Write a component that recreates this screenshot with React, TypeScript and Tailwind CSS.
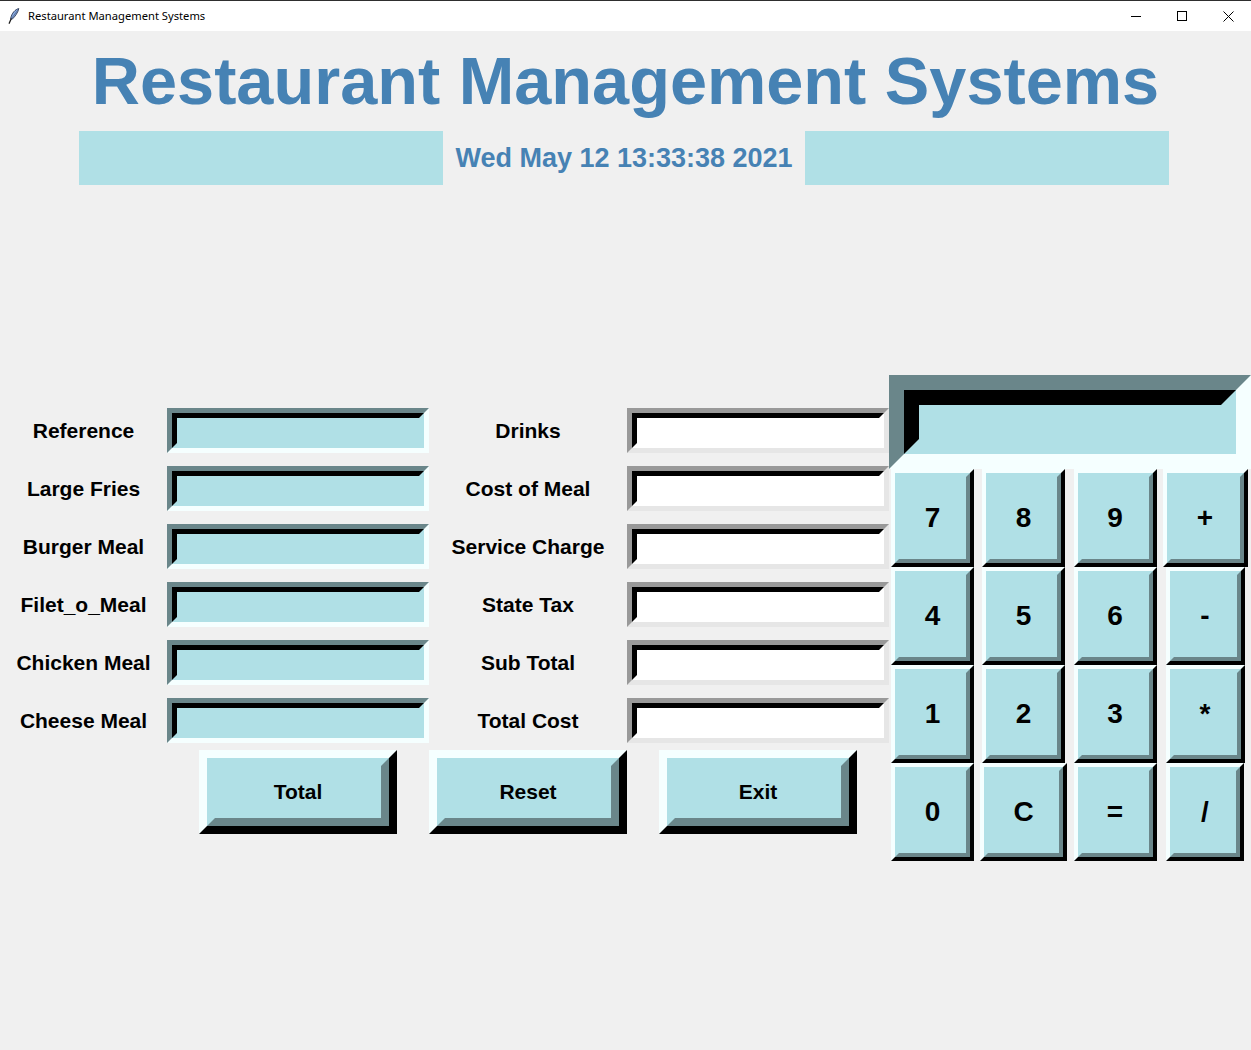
const POWDER = '#b0e0e6'

const leftRows = ['Reference', 'Large Fries', 'Burger Meal', 'Filet_o_Meal', 'Chicken Meal', 'Cheese Meal']
const midRows = ['Drinks', 'Cost of Meal', 'Service Charge', 'State Tax', 'Sub Total', 'Total Cost']

const calcRows = [
  [{ t: '7', w: 83 }, { t: '8', w: 83 }, { t: '9', w: 83 }, { t: '+', w: 85 }],
  [{ t: '4', w: 83 }, { t: '5', w: 83 }, { t: '6', w: 83 }, { t: '-', w: 79 }],
  [{ t: '1', w: 83 }, { t: '2', w: 83 }, { t: '3', w: 83 }, { t: '*', w: 79 }],
  [{ t: '0', w: 83 }, { t: 'C', w: 87 }, { t: '=', w: 83 }, { t: '/', w: 78 }],
]

function Feather() {
  return (
    <svg width="12" height="16" viewBox="0 0 12 16">
      <path d="M10.8 0.6 C7.5 1.2 3.6 5 2.6 10.8 L4.2 11.2 C7.2 8.4 10 4.5 10.8 0.6 Z" fill="#86a9e0" stroke="#2a3650" strokeWidth="0.9" />
      <path d="M9.5 2.5 L3.4 10.8" stroke="#3c4c6e" strokeWidth="0.6" />
      <path d="M3.1 11 L1.2 15.2" stroke="#1b1b1b" strokeWidth="1.3" strokeLinecap="round" />
    </svg>
  )
}

function TitleBar() {
  return (
    <div className="h-[31px] bg-white border-t border-[#2e2e2e] flex items-center shrink-0">
      <div className="pl-[8px] pr-[8px] flex items-center">
        <Feather />
      </div>
      <span className="text-[11.2px] text-black" style={{ fontFamily: '"Noto Sans", "Open Sans", sans-serif' }}>
        Restaurant Management Systems
      </span>
      <div className="ml-auto flex h-full">
        <div className="w-[46px] flex items-center justify-center">
          <svg width="10" height="10" viewBox="0 0 10 10"><path d="M0 5.5 H10" stroke="#000" strokeWidth="1" /></svg>
        </div>
        <div className="w-[46px] flex items-center justify-center">
          <svg width="10" height="10" viewBox="0 0 10 10"><rect x="0.5" y="0.5" width="9" height="9" fill="none" stroke="#000" strokeWidth="1" /></svg>
        </div>
        <div className="w-[46px] flex items-center justify-center">
          <svg width="11" height="11" viewBox="0 0 11 11"><path d="M0.5 0.5 L10.5 10.5 M10.5 0.5 L0.5 10.5" stroke="#000" strokeWidth="1" /></svg>
        </div>
      </div>
    </div>
  )
}

function Entry({ white }: { white?: boolean }) {
  return white ? (
    <div className="h-[45px] border-[5px] border-t-[#999999] border-l-[#999999] border-b-[#e6e6e6] border-r-[#e6e6e6]">
      <div className="h-full border-[5px] border-t-black border-l-black border-b-white border-r-white bg-white" />
    </div>
  ) : (
    <div className="h-[45px] border-[5px] border-t-[#6a868a] border-l-[#6a868a] border-b-[#f5ffff] border-r-[#f5ffff]">
      <div className="h-full border-[5px] border-t-black border-l-black border-b-[#b0e0e6] border-r-[#b0e0e6] bg-[#b0e0e6]" />
    </div>
  )
}

function BigButton({ label }: { label: string }) {
  return (
    <div className="w-[198px] h-[84px] border-[8px] border-t-[#f5ffff] border-l-[#f5ffff] border-b-black border-r-black">
      <div className="h-full border-[8px] border-t-[#b0e0e6] border-l-[#b0e0e6] border-b-[#6a868a] border-r-[#6a868a] bg-[#b0e0e6] flex items-center justify-center text-[21px] font-bold text-black">
        {label}
      </div>
    </div>
  )
}

function CalcButton({ label, w }: { label: string; w: number }) {
  return (
    <div className="h-[98px] border-[4px] border-t-[#f5ffff] border-l-[#f5ffff] border-b-black border-r-black" style={{ width: w }}>
      <div className="h-full border-[4px] border-t-[#b0e0e6] border-l-[#b0e0e6] border-b-[#6a868a] border-r-[#6a868a] bg-[#b0e0e6] flex items-center justify-center text-[28px] font-bold text-black">
        {label}
      </div>
    </div>
  )
}

export default function App() {
  return (
    <div
      className="w-[1251px] h-[1050px] overflow-hidden flex flex-col bg-[#f0f0f0]"
      style={{ fontFamily: '"Liberation Sans", Arial, sans-serif' }}
    >
      <TitleBar />

      {/* Heading */}
      <div className="pt-[17px] text-center">
        <h1 className="text-[66.7px] leading-[67px] font-bold text-[#4682b4]">Restaurant Management Systems</h1>
      </div>

      {/* Date row */}
      <div className="mt-[16px] flex items-center pl-[79px]">
        <div className="w-[364px] h-[54px] bg-[#b0e0e6]" />
        <div className="w-[362px] text-center text-[27px] font-bold text-[#4682b4]">Wed May 12 13:33:38 2021</div>
        <div className="w-[364px] h-[54px] bg-[#b0e0e6]" />
      </div>

      {/* Main */}
      <div className="mt-[190px] flex items-start">
        <div className="w-[889px] pt-[33px]">
          <div className="grid grid-cols-[167px_262px_198px_262px] gap-y-[13px]">
            {leftRows.map((l, i) => (
              <div key={l} className="contents">
                <div className="h-[45px] flex items-center justify-center text-[21px] font-bold text-black">{l}</div>
                <Entry />
                <div className="h-[45px] flex items-center justify-center text-[21px] font-bold text-black">{midRows[i]}</div>
                <Entry white />
              </div>
            ))}
          </div>
          <div className="mt-[7px] flex pl-[199px] gap-[32px]">
            <BigButton label="Total" />
            <BigButton label="Reset" />
            <BigButton label="Exit" />
          </div>
        </div>

        {/* Calculator */}
        <div className="w-[362px]">
          <div className="h-[94px] border-[15px] border-t-[#6a868a] border-l-[#6a868a] border-b-[#f5ffff] border-r-[#f5ffff]">
            <div className="h-full border-[15px] border-t-black border-l-black border-b-[#b0e0e6] border-r-[#b0e0e6]" style={{ backgroundColor: POWDER }} />
          </div>
          <div className="grid grid-cols-[87px_95px_88px_92px] justify-items-center">
            {calcRows.flat().map((b) => (
              <CalcButton key={b.t} label={b.t} w={b.w} />
            ))}
          </div>
        </div>
      </div>
    </div>
  )
}
